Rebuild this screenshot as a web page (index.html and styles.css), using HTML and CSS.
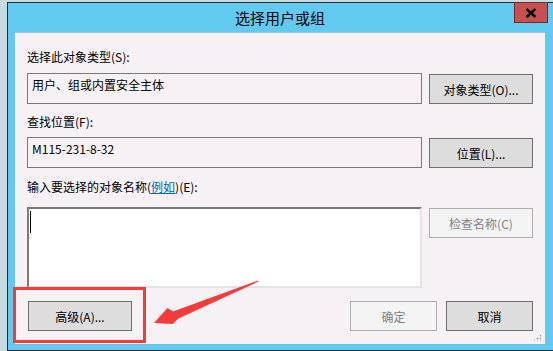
FILE: index.html
```html
<!DOCTYPE html>
<html lang="zh-CN">
<head>
    <meta charset="UTF-8">
    <title>选择用户或组</title>
    <link rel="stylesheet" href="styles.css">
</head>
<body>
    <div class="window">
        <div class="titlebar">
            <span></span>
            <span class="title">选择用户或组</span>
            <button class="close" type="button">
                <svg width="12" height="10" viewBox="0 0 12 10"><path d="M1.5 1 L10.5 9 M10.5 1 L1.5 9" stroke="#000" stroke-width="2.4" fill="none"/></svg>
            </button>
        </div>
        <div class="client">
            <div class="label">选择此对象类型(<u>S</u>):</div>
            <div class="row">
                <div class="field">用户、组或内置安全主体</div>
                <button class="btn side" type="button">对象类型(<u>O</u>)...</button>
            </div>

            <div class="label label2">查找位置(<u>F</u>):</div>
            <div class="row">
                <div class="field">M115-231-8-32</div>
                <button class="btn side" type="button">位置(<u>L</u>)...</button>
            </div>

            <div class="label label3">输入要选择的对象名称(<a href="#">例如</a>)(<u>E</u>):</div>
            <div class="row">
                <div class="names"><span class="caret"></span></div>
                <button class="btn side disabled" type="button">检查名称(<u>C</u>)</button>
            </div>

            <div class="footer">
                <button class="btn advanced" type="button">高级(<u>A</u>)...</button>
                <span class="spacer"></span>
                <button class="btn small disabled" type="button">确定</button>
                <button class="btn small" type="button">取消</button>
            </div>
            <div class="grip"></div>
        </div>
    </div>

    <svg class="annotation" width="553" height="351" viewBox="0 0 553 351">
        <rect x="14.5" y="288.5" width="130" height="53" fill="none" stroke="#f53a3a" stroke-width="3"/>
        <polygon points="258,280.5 173,311.5 167.5,308 154,323 172.5,324 178.5,318.5 258.5,281.5" fill="#f53a3a"/>
    </svg>
</body>
</html>
```

FILE: styles.css
```css
html, body {
    margin: 0;
    padding: 0;
}
body {
    width: 553px;
    height: 351px;
    overflow: hidden;
    background-color: #c8d9df;
    font-family: "Noto Sans CJK SC", "Microsoft YaHei", sans-serif;
    font-size: 12px;
    color: #000;
    position: relative;
}
.window {
    margin: 2px 0 0 7px;
    width: 547px;
    height: 349px;
    border: 1px solid #2a2e33;
    background-color: #62c9ef;
    padding: 0 8px 6px 7px;
    box-sizing: border-box;
    display: flex;
    flex-direction: column;
}
.titlebar {
    height: 29px;
    display: grid;
    grid-template-columns: 1fr auto 1fr;
    margin: 0 -8px 0 -7px;
    padding-right: 1px;
}
.title {
    font-size: 15px;
    line-height: 29px;
    color: #000;
}
.close {
    justify-self: end;
    align-self: start;
    width: 34px;
    height: 21px;
    margin-right: 4px;
    margin-top: -1px;
    padding: 0;
    border: 1px solid #6e2d2d;
    background-color: #c75050;
    display: flex;
    align-items: center;
    justify-content: center;
}
.close svg {
    display: block;
}
.client {
    flex: 1;
    background-color: #f5f1f5;
    border-top: 1px solid #a9c3d3;
    padding: 0 12px 0 12px;
    position: relative;
}
.label {
    margin-top: 16px;
    height: 16px;
    line-height: 16px;
    white-space: nowrap;
}
.label u, .btn u {
    text-decoration: none;
}
.label a {
    color: #0066cc;
    text-decoration: underline;
}
.label2 {
    margin-top: 10px;
}
.label3 {
    margin-top: 11px;
}
.row {
    display: flex;
    align-items: flex-start;
    gap: 7px;
    margin-top: 8px;
}
.label2 + .row {
    margin-top: 7px;
}
.label3 + .row {
    margin-top: 12px;
}
.field {
    width: 395px;
    height: 31px;
    box-sizing: border-box;
    border: 1px solid #7a7a7a;
    padding: 3px 4px;
    line-height: 16px;
    white-space: nowrap;
}
.names {
    width: 395px;
    height: 81px;
    box-sizing: border-box;
    background-color: #fff;
    border-top: 2px solid #7a7a7a;
    border-left: 2px solid #7a7a7a;
    border-right: 2px solid #e4e4e4;
    border-bottom: 2px solid #e4e4e4;
    padding: 2px 1px;
}
.caret {
    display: block;
    width: 1px;
    height: 22px;
    background-color: #000;
}
.btn {
    font-family: inherit;
    font-size: 12px;
    color: #000;
    background-color: #dddddd;
    border: 1px solid #707070;
    padding: 0;
    height: 30px;
    box-sizing: border-box;
    white-space: nowrap;
}
.side {
    width: 104px;
    margin-top: 1px;
}
.btn.disabled {
    background-color: #f4f4f4;
    border-color: #adadad;
    color: #838383;
}
.footer {
    display: flex;
    gap: 9px;
    margin-top: 13px;
}
.advanced {
    width: 104px;
    margin-left: 1px;
}
.spacer {
    flex: 1;
}
.small {
    width: 87px;
}
.grip {
    position: absolute;
    right: 4px;
    bottom: 3px;
    width: 8px;
    height: 7px;
    background-image: radial-gradient(circle, #a8a8a8 0.9px, transparent 1.1px);
    background-size: 3px 3px;
    clip-path: polygon(100% 0, 100% 100%, 0 100%);
}
.annotation {
    position: absolute;
    top: 0;
    left: 0;
    pointer-events: none;
}
```
